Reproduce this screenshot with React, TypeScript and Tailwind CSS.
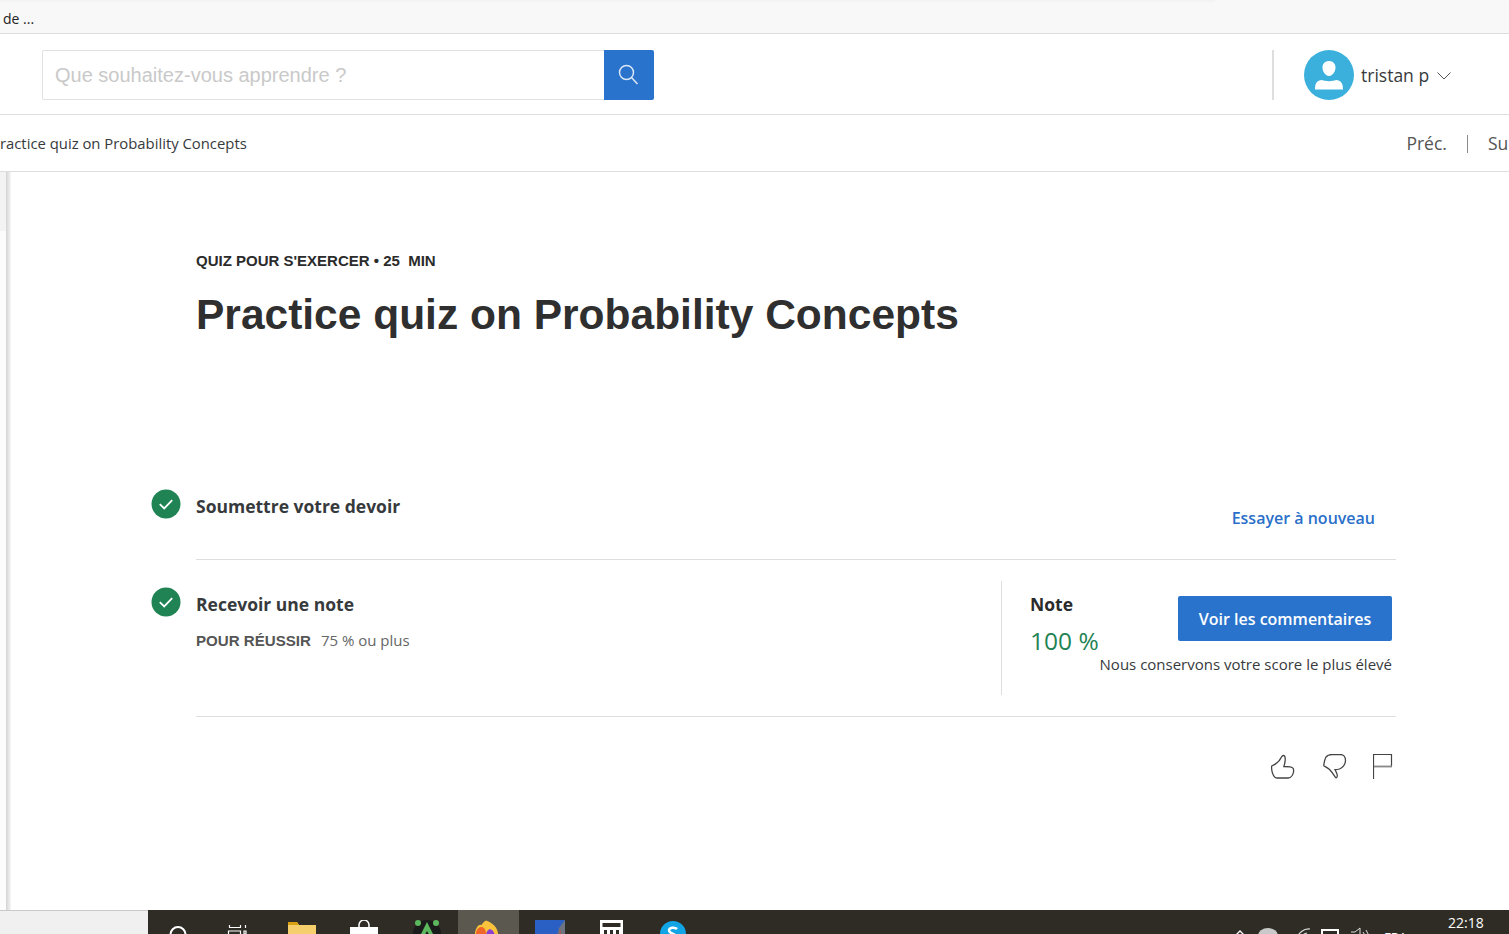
import React from "react";

const Check = () => (
  <svg width="30" height="30" viewBox="0 0 30 30" className="shrink-0">
    <circle cx="15" cy="15" r="14.5" fill="#1f8354" />
    <path d="M8.8 15.2l4.4 4.2 8-8.2" fill="none" stroke="#fff" strokeWidth="1.8" />
  </svg>
);

function TaskIcons() {
  return (
    <div className="flex items-start pt-[15px] h-[24px]">
      <svg width="18" height="20" viewBox="0 0 18 20" className="ml-[21px] mr-[40px]"><circle cx="9" cy="9.5" r="7.5" fill="none" stroke="#fff" strokeWidth="2" /></svg>
      <svg width="22" height="20" viewBox="0 0 22 20" className="mr-[39px]"><path d="M2.5 0v2.5h11V0M1.500 6h12v9h-12zM18.500 0v3M17 6h2v3h-2z" fill="none" stroke="#fff" strokeWidth="1.200" /></svg>
      <svg width="28" height="20" viewBox="0 0 28 20" className="-mt-[3px] mr-[33px]"><path d="M0 0h9l2 3h17v17H0z" fill="#f5cf6b" /><path d="M0 0h9l2 3H0z" fill="#d9a00f" /></svg>
      <svg width="30" height="24" viewBox="0 0 30 24" className="-mt-[5px] mr-[33px]"><path d="M10 8V5a5 5 0 0110 0v3" fill="none" stroke="#fff" strokeWidth="1.500" /><rect x="1" y="7" width="28" height="17" fill="#fff" /><rect x="10" y="14" width="4" height="4" fill="#e8452c" /><rect x="15" y="14" width="4" height="4" fill="#7fba00" /><rect x="10" y="19" width="4" height="4" fill="#00a4ef" /><rect x="15" y="19" width="4" height="4" fill="#ffb900" /></svg>
      <svg width="30" height="24" viewBox="0 0 30 24" className="-mt-[6px] mr-[16px]"><circle cx="15" cy="15" r="14" fill="#1b1b1b" /><circle cx="6" cy="4" r="3" fill="#5cb85c" /><circle cx="24" cy="4" r="3" fill="#5cb85c" /><path d="M15 3l9 18h-4l-5-9-5 9H6z" fill="#5cb85c" /></svg>
      <div className="w-[61px] h-[24px] -mt-[15px] bg-[#5b5850] mr-[16px] pt-[10px] pl-[15px]">
        <svg width="28" height="16" viewBox="0 0 30 16"><path d="M14 0c8 3 13 8 13 16H2C2 9 6 3 9 5c1-2 3-4 5-5z" fill="#f9c33c" /><path d="M3 16c0-6 3-9 6-9s5 3 5 9z" fill="#f0652a" /><path d="M14 16c0-4 2-6 4-7 3 1 5 3 5 7z" fill="#8a3fd1" /></svg>
      </div>
      <svg width="30" height="24" viewBox="0 0 30 24" className="-mt-[5px] mr-[35px]"><rect width="30" height="24" fill="#2a5fc4" /><path d="M30 0v24H20L24 8z" fill="#6b7480" /><path d="M25 8l2 16h-3z" fill="#d8413a" /></svg>
      <svg width="23" height="20" viewBox="0 0 23 20" className="-mt-[5px] mr-[36px]"><rect width="23" height="20" fill="#fff" /><rect x="2.500" y="3" width="18" height="4" fill="#2f2c26" /><path d="M4 10h3v4H4zM10 10h3v4h-3zM16 10h3v4h-3z" fill="#2f2c26" /></svg>
      <svg width="28" height="20" viewBox="0 0 28 20" className="-mt-[4px]"><circle cx="14" cy="13" r="13" fill="#12a5e6" /><path d="M18 8c-2-2-8-2-8 1.500S18 13 18 16.500 11 20 9 18" fill="none" stroke="#fff" strokeWidth="2.500" /></svg>
    </div>
  );
}

function Tray() {
  return (
    <div className="flex items-start h-[24px] text-white pr-[17px]">
      <svg width="12" height="10" viewBox="0 0 12 10" className="mt-[19px] mr-[12px]"><path d="M1 7l5-5 5 5" fill="none" stroke="#fff" strokeWidth="1.300" /></svg>
      <svg width="20" height="12" viewBox="0 0 20 12" className="mt-[17px] mr-[18px]"><ellipse cx="10" cy="9" rx="10" ry="8" fill="#c9c9c9" /></svg>
      <svg width="16" height="14" viewBox="0 0 16 14" className="mt-[17px] mr-[9px]"><path d="M1 12a12 12 0 0113-10M5 13a7 7 0 016-7" fill="none" stroke="#ddd" strokeWidth="1.200" /></svg>
      <svg width="18" height="10" viewBox="0 0 18 10" className="mt-[19px] mr-[11px]"><rect x="1" y="1" width="16" height="12" fill="none" stroke="#fff" strokeWidth="2" /></svg>
      <svg width="20" height="14" viewBox="0 0 20 14" className="mt-[17px] mr-[14px]"><path d="M1 5h4l5-4v13M13 5q2 2 2 6M16 3q3 4 3 9" fill="none" stroke="#ddd" strokeWidth="1" /></svg>
      <span className="text-[13px] mt-[18px] w-[64px] leading-[18px] font-['Open_Sans',sans-serif]">FRA</span>
      <span className="text-[14px] leading-[18px] mt-[4px] w-[44px] font-['Open_Sans',sans-serif]">22:18</span>
    </div>
  );
}

export default function App() {
  return (
    <div className="w-[1509px] h-[934px] overflow-hidden flex flex-col bg-white text-[#373a3c] font-['Open_Sans',sans-serif]">
      <div className="h-[34px] shrink-0 bg-[#f8f8f8] border-b border-[#dedede] flex items-center pl-[3px] pt-[3px] text-[14px] text-[#222] relative">
        <div className="absolute top-0 left-0 w-[1215px] h-[3px] bg-gradient-to-b from-[#f1f1f1] to-[#f8f8f8]" />
        de ...
      </div>

      <div className="h-[81px] shrink-0 border-b border-[#dedede] flex items-center pl-[42px] pt-[1px]">
        <div className="flex w-[612px] h-[50px]">
          <input
            readOnly
            placeholder="Que souhaitez-vous apprendre ?"
            className="w-[562px] h-[50px] border border-[#e2e2e2] border-r-0 rounded-l-[2px] pl-[12px] pt-[2px] text-[20px] outline-none font-['Liberation_Sans',sans-serif] placeholder:text-[#c9c9c9]"
          />
          <div className="w-[50px] h-[50px] bg-[#2a73cc] rounded-r-[2px] flex items-center justify-center">
            <svg width="22" height="22" viewBox="0 0 22 22" fill="none" stroke="#dbe7f6" strokeWidth="1.500" className="-ml-[3px] -mt-[1px]"><circle cx="9.500" cy="9.500" r="7" /><path d="M14.500 14.500l6 6.500" /></svg>
          </div>
        </div>
        <div className="w-[2px] h-[50px] bg-[#dedede] ml-[618px]" />
        <svg width="50" height="50" viewBox="0 0 50 50" className="ml-[30px] shrink-0">
          <circle cx="25" cy="25" r="25" fill="#3cb0dc" />
          <path d="M25 11c4.500 0 6.500 3 6.500 6.500 0 4-3 8.500-6.500 8.500s-6.500-4.500-6.500-8.500C18.500 14 20.500 11 25 11zM11 39.500c0-6.500 2-9 7-9.500 3 1.500 11 1.500 14 0 5 .5 7 3 7 9.500z" fill="#fff" />
        </svg>
        <span className="ml-[7px] mt-[2px] text-[17.500px] text-[#373a3c]">tristan p</span>
        <svg width="14" height="8" viewBox="0 0 14 8" className="ml-[8px] mt-[3px]" fill="none" stroke="#555" strokeWidth="1"><path d="M.5.5L7 7l6.500-6.500" /></svg>
      </div>

      <div className="h-[57px] shrink-0 border-b border-[#dedede] flex items-center overflow-hidden pt-[1px]">
        <span className="-ml-[9px] text-[14.850px] text-[#373a3c] whitespace-nowrap">Practice quiz on Probability Concepts</span>
        <div className="ml-auto flex items-center text-[#555] text-[17.500px] -mr-[17px]">
          <span>Préc.</span>
          <div className="w-px h-[18px] bg-[#8a8a8a] mx-[20px]" />
          <span>Suiv.</span>
        </div>
      </div>

      <div className="flex-1 flex min-h-0">
        <div className="w-[11px] shrink-0 flex">
          <div className="w-[6px] bg-[#fcfcfc]">
            <div className="h-[59px] bg-[#f3f3f3]" />
          </div>
          <div className="w-[5px] bg-gradient-to-r from-[#d4d4d4] to-[#f6f6f6]" />
        </div>
        <div className="flex-1 flex flex-col pl-[140px]">
          <div className="pl-[45px] pt-[80px] h-[300px]">
            <div className="text-[15px] leading-[18px] font-bold font-['Liberation_Sans',sans-serif] text-[#2b2b2b] whitespace-pre">QUIZ POUR S'EXERCER • 25  MIN</div>
            <h1 className="mt-[19px] text-[42.500px] leading-[52px] font-bold font-['Liberation_Sans',sans-serif] text-[#2f2f2f]">Practice quiz on Probability Concepts</h1>
          </div>

          <div className="flex gap-[15px] h-[88px] w-[1245px] pt-[17px]">
            <Check />
            <div className="flex-1 flex justify-between border-b border-[#dedede]">
              <span className="text-[17.500px] leading-[24px] font-bold text-[#373a3c] mt-[5px]">Soumettre votre devoir</span>
              <span className="text-[16px] leading-[22px] font-semibold text-[#2a6fc9] mt-[18px] mr-[21px]">Essayer à nouveau</span>
            </div>
          </div>

          <div className="flex gap-[15px] w-[1245px] pt-[27px]">
            <Check />
            <div className="flex-1 h-[136px] border-b border-[#dedede] flex -mt-[6px]">
              <div className="w-[805px]">
                <div className="text-[17.500px] leading-[24px] font-bold text-[#373a3c] mt-[11px]">Recevoir une note</div>
                <div className="mt-[13px] flex items-center text-[15px] leading-[20px]">
                  <span className="font-bold text-[#555] font-['Liberation_Sans',sans-serif] text-[15.100px] mt-[2px]">POUR RÉUSSIR</span>
                  <span className="ml-[10px] text-[#666]">75 % ou plus</span>
                </div>
              </div>
              <div className="w-[391px] h-[114px] border-l border-[#dedede] pl-[28px] relative">
                <div className="flex justify-between">
                  <div>
                    <div className="text-[17.500px] leading-[24px] font-bold text-[#2b2b2b] mt-[11px]">Note</div>
                    <div className="text-[24.500px] leading-[32px] text-[#1f8354] mt-[9px]">100 %</div>
                  </div>
                  <div className="w-[214px] h-[45px] mt-[15px] bg-[#2a73cc] rounded-[2px] text-white font-semibold text-[16px] flex items-center justify-center">Voir les commentaires</div>
                </div>
                <div className="text-right text-[15px] leading-[20px] text-[#373a3c] -mt-[3px]">Nous conservons votre score le plus élevé</div>
              </div>
            </div>
          </div>

          <div className="w-[1245px] flex justify-end pr-[3px] pt-[37px] gap-[27px]">
            <svg width="26" height="26" viewBox="1271 754 26 26" fill="none" stroke="#444" strokeWidth="1.300"><path d="M1284.500 755.500c-1 0-1.500 .5-2 1.500-1.500 3.500-4 6.500-9.800 9 -.5 4 1 10 3.500 11.500 .5 .3 1 .5 2 .5h11c2 0 3-1 4-2.500 1.500-2.500 1.800-5 1-7-.5-1-1.500-1.500-3-1.700-2-.3-4-.3-6.300-.3 .8-2.500 1.500-5 1.300-8-.1-2-1-3-1.700-3z" /></svg>
            <svg width="24" height="26" viewBox="1323 754 24 26" fill="none" stroke="#444" strokeWidth="1.300" className="-mr-[1px]"><path d="M1326 757c1.500-2 3.500-2.500 6-2.500h8.500c3 0 5 2.500 5 6 0 4-3 7.500-6 8.500-1.500 .5-3 .7-4.500 .7 1 2 2.500 4 2.300 6-.1 1.500-1 3-2 1.500-1.500-2.500-3.500-5.500-6-8-1.500-1.200-3-2-5.500-3.500 .2-3 1-6.500 2.200-8.700z" /></svg>
            <svg width="20" height="26" viewBox="1374 754 20 26" fill="none"><path d="M1374.500 779V754.500H1392.500V766" stroke="#444" strokeWidth="1.200" /><path d="M1375 766.500H1393" stroke="#888" strokeWidth="1.800" /></svg>
          </div>
        </div>
      </div>

      <div className="h-[24px] shrink-0 flex overflow-hidden">
        <div className="w-[148px] bg-[#f0f0f0] border-t border-[#c9c9c9]" />
        <div className="flex-1 bg-[#2f2c26] flex justify-between overflow-hidden">
          <TaskIcons />
          <Tray />
        </div>
      </div>
    </div>
  );
}
